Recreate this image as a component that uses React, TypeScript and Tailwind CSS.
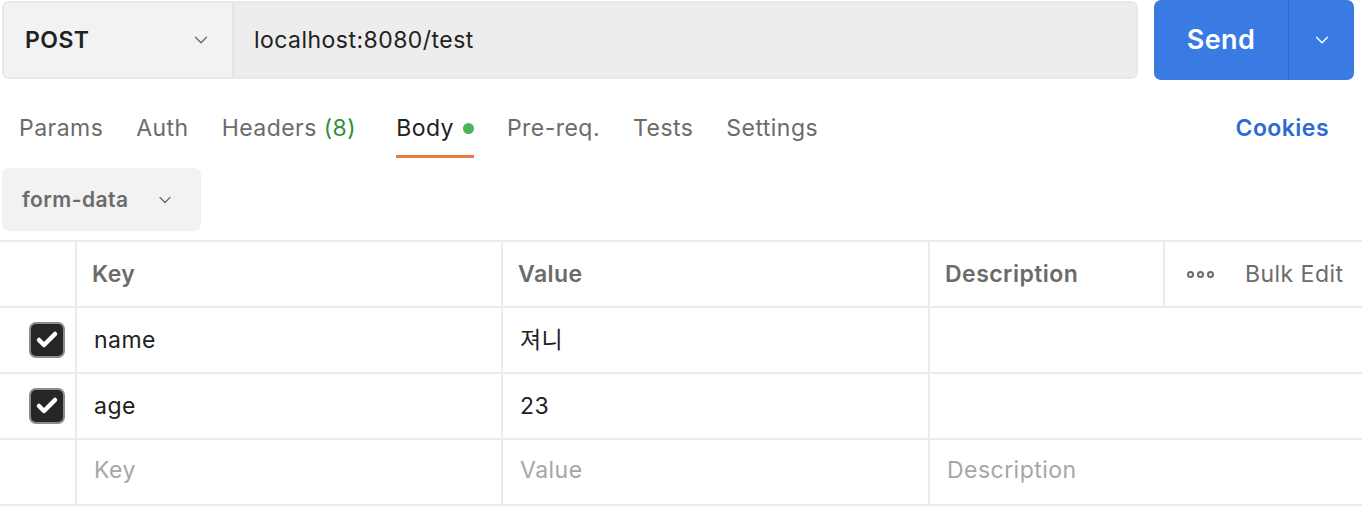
import { ChevronDown, Check } from 'lucide-react'

const rows = [
    { key: 'name', value: '져니' },
    { key: 'age', value: '23' },
]

export default function App() {
    return (
        <div className="w-[1362px] h-[524px] bg-white overflow-hidden font-['Inter','Noto_Sans_CJK_KR',sans-serif] text-[23px] tracking-[0.02em] text-[#212121]">
            {/* Request bar */}
            <div className="flex items-start h-[80px]">
                <div className="ml-[2px] mt-[1px] flex w-[1136px] h-[78px] rounded-[7px] border-2 border-[#e8e8e8] overflow-hidden">
                    <div className="flex items-center w-[230px] shrink-0 bg-[#f2f2f2] border-r-2 border-[#e6e6e6] pl-[21px] pr-[20px]">
                        <span className="font-semibold text-[#212121] flex-1">POST</span>
                        <ChevronDown className="w-[22px] h-[22px] text-[#6b6b6b]" strokeWidth={1.5} />
                    </div>
                    <div className="flex items-center flex-1 bg-[#ededed] pl-[20px]">
                        localhost:8080/test
                    </div>
                </div>
                <div className="ml-[16px] flex w-[200px] h-[80px] rounded-[7px] bg-[#3a7be3] text-white overflow-hidden">
                    <div className="flex items-center justify-center w-[135px] pt-[1px] border-r border-[#2f6bcf] font-semibold text-[27px]">
                        Send
                    </div>
                    <div className="flex items-center justify-center flex-1">
                        <ChevronDown className="w-[22px] h-[22px]" strokeWidth={1.5} />
                    </div>
                </div>
            </div>

            {/* Tabs */}
            <div className="flex items-start h-[88px] pl-[19px] pr-[33px]">
                <div className="flex gap-[33px] pt-[31px]">
                    <span className="text-[#6b6b6b]">Params</span>
                    <span className="text-[#6b6b6b]">Auth</span>
                    <span className="text-[#6b6b6b]">
                        Headers <span className="text-[#2f8f3a]">(8)</span>
                    </span>
                    <div className="ml-[7px] flex flex-col">
                        <span className="flex items-center gap-[9px] text-[#212121]">
                            Body
                            <span className="w-[11px] h-[11px] rounded-full bg-[#4fb35e]" />
                        </span>
                        <span className="mt-[9px] h-[3px] bg-[#ef7845]" />
                    </div>
                    <span className="text-[#6b6b6b]">Pre-req.</span>
                    <span className="text-[#6b6b6b]">Tests</span>
                    <span className="text-[#6b6b6b]">Settings</span>
                </div>
                <span className="ml-auto pt-[31px] font-semibold text-[#2c6ad6]">Cookies</span>
            </div>

            {/* Body type */}
            <div className="ml-[2px] flex items-center w-[199px] h-[63px] rounded-[7px] bg-[#f2f2f2] pl-[20px] pr-[26px] text-[21px] font-semibold text-[#6b6b6b]">
                <span className="flex-1">form-data</span>
                <ChevronDown className="w-[20px] h-[20px]" strokeWidth={1.5} />
            </div>

            {/* Table */}
            <div className="mt-[9px] grid grid-cols-[77px_426px_427px_235px_1fr] border-t-2 border-[#ebebeb]">
                <div className="h-[66px] border-b-2 border-r-2 border-[#ebebeb]" />
                <div className="h-[66px] flex items-center pl-[15px] border-b-2 border-r-2 border-[#ebebeb] font-semibold text-[#6b6b6b]">Key</div>
                <div className="h-[66px] flex items-center pl-[15px] border-b-2 border-r-2 border-[#ebebeb] font-semibold text-[#6b6b6b]">Value</div>
                <div className="h-[66px] flex items-center pl-[15px] border-b-2 border-r-2 border-[#ebebeb] font-semibold text-[#6b6b6b]">Description</div>
                <div className="h-[66px] flex items-center pl-[22px] border-b-2 border-[#ebebeb] text-[#6b6b6b]">
                    <span className="flex gap-[3px] mr-[31px]">
                        <span className="w-[7px] h-[7px] rounded-full border-2 border-[#6b6b6b]" />
                        <span className="w-[7px] h-[7px] rounded-full border-2 border-[#6b6b6b]" />
                        <span className="w-[7px] h-[7px] rounded-full border-2 border-[#6b6b6b]" />
                    </span>
                    Bulk Edit
                </div>

                {rows.map((row) => (
                    <div key={row.key} className="contents">
                        <div className="h-[66px] flex items-center justify-end pr-[10px] border-b-2 border-r-2 border-[#ebebeb]">
                            <span className="flex items-center justify-center w-[36px] h-[36px] rounded-[7px] bg-[#262626] border-2 border-[#8c8c8c]">
                                <Check className="w-[24px] h-[24px] text-white" strokeWidth={4.5} />
                            </span>
                        </div>
                        <div className="h-[66px] flex items-center pl-[17px] border-b-2 border-r-2 border-[#ebebeb]">{row.key}</div>
                        <div className="h-[66px] flex items-center pl-[17px] border-b-2 border-r-2 border-[#ebebeb]">{row.value}</div>
                        <div className="h-[66px] col-span-2 border-b-2 border-[#ebebeb]" />
                    </div>
                ))}

                <div className="h-[66px] border-b-2 border-r-2 border-[#ebebeb]" />
                <div className="h-[66px] flex items-center pl-[17px] pb-[4px] border-b-2 border-r-2 border-[#ebebeb] text-[#a6a6a6]">Key</div>
                <div className="h-[66px] flex items-center pl-[17px] pb-[4px] border-b-2 border-r-2 border-[#ebebeb] text-[#a6a6a6]">Value</div>
                <div className="h-[66px] col-span-2 flex items-center pl-[17px] pb-[4px] border-b-2 border-[#ebebeb] text-[#a6a6a6]">Description</div>
            </div>
        </div>
    )
}
